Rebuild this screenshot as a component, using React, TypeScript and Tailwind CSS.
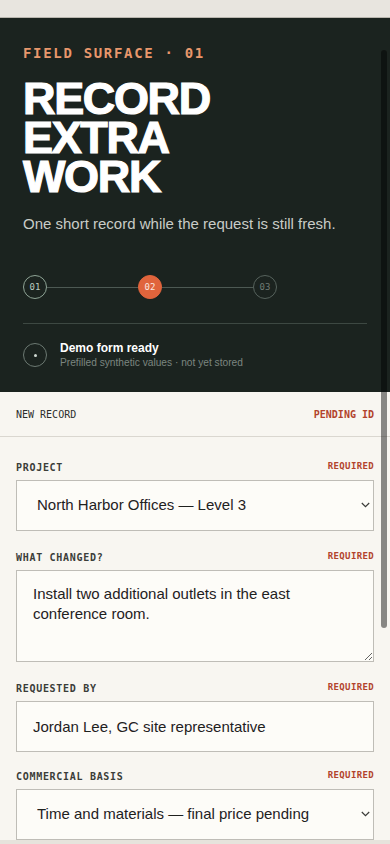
import React from "react";

const mono = "font-['DejaVu_Sans_Mono',monospace]";
const sans = "font-['Liberation_Sans',Arial,sans-serif]";

function FieldLabel({ children }: { children: React.ReactNode }) {
    return (
        <div className="flex items-center justify-between h-[14px] mb-[6px]">
            <span className={`${mono} text-[10px] font-bold tracking-[0.07em] text-[#3b3d39] uppercase`}>
                {children}
            </span>
            <span className={`${mono} text-[9px] font-bold tracking-[0.04em] text-[#b2432c]`}>
                REQUIRED
            </span>
        </div>
    );
}

function Step({ n, state }: { n: string; state: "done" | "active" | "todo" }) {
    const cls =
        state === "active"
            ? "bg-[#e0643c] border-[#e0643c] text-[#fbe9e0]"
            : state === "done"
              ? "border-[#8ea395] text-[#b9cbbf]"
              : "border-[#56625c] text-[#6f7b74]";
    return (
        <div className={`w-6 h-6 rounded-full border flex items-center justify-center shrink-0 ${cls}`}>
            <span className={`${mono} text-[9px] leading-none`}>{n}</span>
        </div>
    );
}

function Select({ value }: { value: string }) {
    return (
        <div className="relative">
            <select
                defaultValue="v"
                className="block w-full h-[51px] appearance-none border border-[#bfbdb7] bg-[#fdfcf8] pl-5 pr-8 text-[15px] text-[#1f211e]"
            >
                <option value="v">{value}</option>
            </select>
            <svg
                className="pointer-events-none absolute right-[4px] top-[22px]"
                width="9"
                height="6"
                viewBox="0 0 9 6"
                fill="none"
            >
                <path d="M0.8 1 L4.5 4.6 L8.2 1" stroke="#3a3b38" strokeWidth="1.2" />
            </svg>
        </div>
    );
}

export default function App() {
    return (
        <div className={`h-[844px] w-[390px] overflow-hidden bg-[#e6e3dc] ${sans} relative`}>
            {/* top strip */}
            <div className="h-[18px] border-b border-[#b9b6ae] bg-[#e8e5df]" />

            {/* Dark header */}
            <section className="bg-[#1b231f] px-[23px] pt-6 pb-[22px]">
                <div className={`${mono} text-[14px] leading-[22px] font-bold tracking-[0.12em] text-[#e8976c]`}>
                    FIELD SURFACE · 01
                </div>
                <h1 className="mt-[15px] text-[45px] font-bold tracking-[-0.03em] text-white [-webkit-text-stroke:1.2px_white]">
                    <span className="block h-[39px] leading-[39px]">RECORD</span>
                    <span className="block h-[39px] leading-[39px]">EXTRA</span>
                    <span className="block h-[39px] leading-[39px]">WORK</span>
                </h1>
                <p className="mt-[17px] text-[15px] leading-[22px] text-[#c9ccc7]">
                    One short record while the request is still fresh.
                </p>

                {/* Stepper */}
                <div className="mt-[40px] flex items-center">
                    <Step n="01" state="done" />
                    <div className="w-[91px] h-px bg-[#4d5953]" />
                    <Step n="02" state="active" />
                    <div className="w-[91px] h-px bg-[#4d5953]" />
                    <Step n="03" state="todo" />
                </div>

                <div className="mt-6 h-px bg-[#3d4842]" />

                {/* Status */}
                <div className="mt-4 flex items-center gap-[13px]">
                    <div className="w-6 h-6 rounded-full border border-[#6c7972] flex items-center justify-center">
                        <div className="w-[3px] h-[3px] rounded-full bg-[#cfd8d2]" />
                    </div>
                    <div>
                        <div className="text-[12px] leading-[16px] font-bold text-white">Demo form ready</div>
                        <div className="text-[10.2px] leading-[14px] text-[#7c8680]">
                            Prefilled synthetic values · not yet stored
                        </div>
                    </div>
                </div>
            </section>

            {/* Form */}
            <section className="bg-[#f8f6f1]">
                <div className="h-[45px] px-4 flex items-center justify-between border-b border-[#dad7d0]">
                    <span className={`${mono} text-[10px] text-[#2c2e2b]`}>NEW RECORD</span>
                    <span className={`${mono} text-[10px] font-bold text-[#b2432c]`}>PENDING ID</span>
                </div>

                <div className="px-4 pt-[23px] flex flex-col gap-[19px]">
                    <div>
                        <FieldLabel>Project</FieldLabel>
                        <Select value="North Harbor Offices — Level 3" />
                    </div>

                    <div>
                        <FieldLabel>What changed?</FieldLabel>
                        <textarea
                            defaultValue="Install two additional outlets in the east conference room."
                            className="block w-full h-[92px] border border-[#bfbdb7] bg-[#fdfcf8] px-4 py-[13px] text-[15px] leading-[20px] text-[#1f211e]"
                        />
                    </div>

                    <div>
                        <FieldLabel>Requested by</FieldLabel>
                        <input
                            defaultValue="Jordan Lee, GC site representative"
                            className="block w-full h-[51px] border border-[#bfbdb7] bg-[#fdfcf8] px-4 text-[15px] text-[#1f211e]"
                        />
                    </div>

                    <div className="-mt-[2px]">
                        <FieldLabel>Commercial basis</FieldLabel>
                        <Select value="Time and materials — final price pending" />
                    </div>
                </div>
            </section>

            {/* overlay scrollbar thumb */}
            <div className="absolute right-[3px] top-[50px] h-[578px] w-[6px] rounded-full bg-black/45" />
        </div>
    );
}
